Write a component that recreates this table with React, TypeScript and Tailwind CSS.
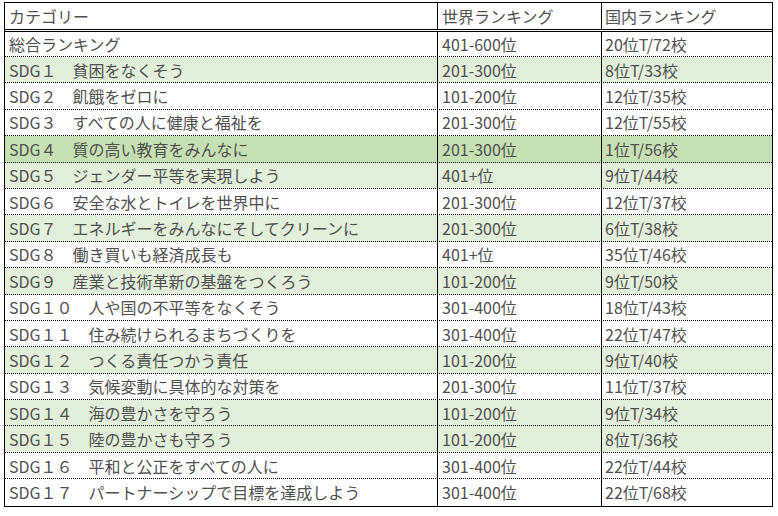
const rows: { name: string; world: string; local: string; tone?: "light" | "dark" }[] = [
  { name: "総合ランキング", world: "401-600位", local: "20位T/72校" },
  { name: "SDG１　貧困をなくそう", world: "201-300位", local: "8位T/33校", tone: "light" },
  { name: "SDG２　飢餓をゼロに", world: "101-200位", local: "12位T/35校" },
  { name: "SDG３　すべての人に健康と福祉を", world: "201-300位", local: "12位T/55校" },
  { name: "SDG４　質の高い教育をみんなに", world: "201-300位", local: "1位T/56校", tone: "dark" },
  { name: "SDG５　ジェンダー平等を実現しよう", world: "401+位", local: "9位T/44校", tone: "light" },
  { name: "SDG６　安全な水とトイレを世界中に", world: "201-300位", local: "12位T/37校" },
  { name: "SDG７　エネルギーをみんなにそしてクリーンに", world: "201-300位", local: "6位T/38校", tone: "light" },
  { name: "SDG８　働き買いも経済成長も", world: "401+位", local: "35位T/46校" },
  { name: "SDG９　産業と技術革新の基盤をつくろう", world: "101-200位", local: "9位T/50校", tone: "light" },
  { name: "SDG１０　人や国の不平等をなくそう", world: "301-400位", local: "18位T/43校" },
  { name: "SDG１１　住み続けられるまちづくりを", world: "301-400位", local: "22位T/47校" },
  { name: "SDG１２　つくる責任つかう責任", world: "101-200位", local: "9位T/40校", tone: "light" },
  { name: "SDG１３　気候変動に具体的な対策を", world: "201-300位", local: "11位T/37校" },
  { name: "SDG１４　海の豊かさを守ろう", world: "101-200位", local: "9位T/34校", tone: "light" },
  { name: "SDG１５　陸の豊かさも守ろう", world: "101-200位", local: "8位T/36校", tone: "light" },
  { name: "SDG１６　平和と公正をすべての人に", world: "301-400位", local: "22位T/44校" },
  { name: "SDG１７　パートナーシップで目標を達成しよう", world: "301-400位", local: "22位T/68校" },
];

function RankingRow({ row, first, last }: { row: (typeof rows)[number]; first: boolean; last: boolean }) {
  const bg =
    row.tone === "dark" ? "bg-[#c6e0b4]" : row.tone === "light" ? "bg-[#e2efda]" : "bg-white";

  return (
    <div
      className={`grid grid-cols-[432px_164px_1fr] ${first ? "h-[25px]" : "h-[26.4px]"} ${bg} ${
        last ? "" : "border-b border-dotted border-black"
      }`}
    >
      <div className="flex items-center truncate pl-[4px]">{row.name}</div>
      <div className="flex items-center border-l border-black pl-[4px]">{row.world}</div>
      <div className="flex items-center border-l border-black pl-[3px]">{row.local}</div>
    </div>
  );
}

export default function App() {
  return (
    <div className="h-[516px] w-[778px] bg-white pt-[2px] pl-[4px]">
      <div
        className="w-[769px] border border-black text-[16px] leading-none text-[#505050]"
        style={{ fontFamily: '"Noto Sans CJK JP", "Noto Sans", sans-serif' }}
      >
        <div className="grid h-[29px] grid-cols-[432px_164px_1fr] border-b-[3px] border-double border-black">
          <div className="flex items-center pl-[4px]">カテゴリー</div>
          <div className="flex items-center border-l border-black pl-[4px]">世界ランキング</div>
          <div className="flex items-center border-l border-black pl-[3px]">国内ランキング</div>
        </div>
        {rows.map((row, i) => (
          <RankingRow key={row.name} row={row} first={i === 0} last={i === rows.length - 1} />
        ))}
      </div>
    </div>
  );
}
